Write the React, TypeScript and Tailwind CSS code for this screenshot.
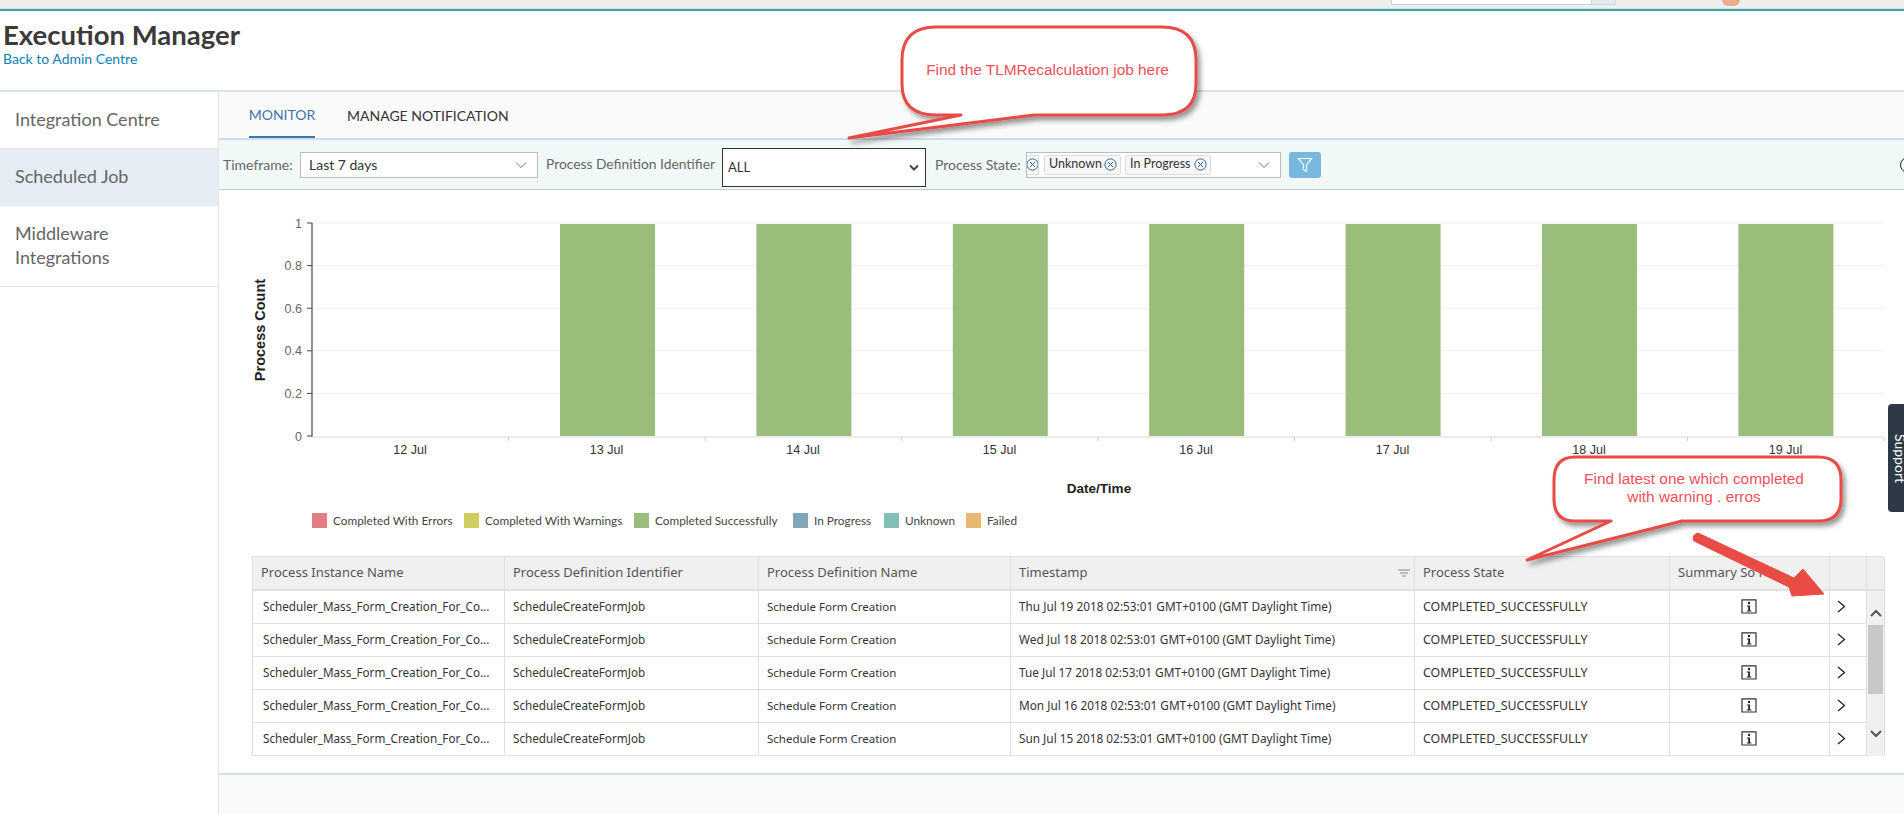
import React from "react";

const rows = [
  "Thu Jul 19 2018 02:53:01 GMT+0100 (GMT Daylight Time)",
  "Wed Jul 18 2018 02:53:01 GMT+0100 (GMT Daylight Time)",
  "Tue Jul 17 2018 02:53:01 GMT+0100 (GMT Daylight Time)",
  "Mon Jul 16 2018 02:53:01 GMT+0100 (GMT Daylight Time)",
  "Sun Jul 15 2018 02:53:01 GMT+0100 (GMT Daylight Time)",
];
const labels = ["12 Jul", "13 Jul", "14 Jul", "15 Jul", "16 Jul", "17 Jul", "18 Jul", "19 Jul"];
const legend = [
  { c: "bg-[#e27d84]", t: "Completed With Errors", w: "w-[152px]" },
  { c: "bg-[#cfcd5f]", t: "Completed With Warnings", w: "w-[170px]" },
  { c: "bg-[#9abd7b]", t: "Completed Successfully", w: "w-[159px]" },
  { c: "bg-[#7fa7b9]", t: "In Progress", w: "w-[91px]" },
  { c: "bg-[#85bdb9]", t: "Unknown", w: "w-[82px]" },
  { c: "bg-[#e8b872]", t: "Failed", w: "w-[60px]" },
];
const cols = "grid grid-cols-[252px_254px_252px_404px_255px_160px_37px]";

function Chevron({ color = "#5a7a96" }: { color?: string }) {
  return (
    <svg width="12" height="8" viewBox="0 0 12 8" fill="none">
      <path d="M1 1.5 L6 6.5 L11 1.5" stroke={color} strokeWidth="1" />
    </svg>
  );
}

function TokenX() {
  return (
    <svg width="13" height="13" viewBox="0 0 13 13" fill="none" className="shrink-0">
      <circle cx="6.5" cy="6.5" r="5.6" stroke="#2f6497" strokeWidth="1" />
      <path d="M4 4 L9 9 M9 4 L4 9" stroke="#2f6497" strokeWidth="1" />
    </svg>
  );
}

function InfoIcon() {
  return (
    <svg width="16" height="15" viewBox="0 0 16 15" fill="none">
      <path d="M1 14 V0.8 H15 V14 H1 Z" stroke="#333" strokeWidth="1.2" />
      <circle cx="8" cy="4" r="1.2" fill="#222" />
      <path d="M6 6.5 H9 V11.6 H10.4 V12.6 H5.8 V11.6 H7.2 V7.5 H6 Z" fill="#222" />
    </svg>
  );
}

function RowChevron() {
  return (
    <svg width="9" height="13" viewBox="0 0 9 13" fill="none">
      <path d="M1 1 L7.5 6.5 L1 12" stroke="#222" strokeWidth="1.3" />
    </svg>
  );
}

function Chart() {
  const ys = [436, 393.4, 350.8, 308.2, 265.6, 223];
  const yl = ["0", "0.2", "0.4", "0.6", "0.8", "1"];
  return (
    <svg width="1685" height="312" viewBox="219 190 1685 312" className="block" fontFamily="'Liberation Sans', sans-serif">
      {ys.slice(1).map((y) => (
        <line key={y} x1="312" x2="1884" y1={y} y2={y} stroke="#ededed" strokeWidth="1" />
      ))}
      {labels.slice(1).map((_, i) => (
        <rect key={i} x={560 + i * 196.4} y="224" width="95" height="212" fill="#9abd7b" />
      ))}
      <line x1="312" x2="312" y1="223" y2="437" stroke="#777" strokeWidth="1.6" />
      <line x1="312" x2="1884" y1="437" y2="437" stroke="#d8d8d8" strokeWidth="1" />
      {ys.map((y, i) => (
        <g key={y}>
          <line x1="307" x2="312" y1={y} y2={y} stroke="#444" strokeWidth="1" />
          <text x="302" y={y + 4.5} fontSize="12.5" textAnchor="end" fill="#666">{yl[i]}</text>
        </g>
      ))}
      {labels.map((l, i) => (
        <g key={l}>
          <line x1={312 + (i + 1) * 196.5} x2={312 + (i + 1) * 196.5} y1="437" y2="441" stroke="#d0d0d0" strokeWidth="1" />
          <text x={410 + i * 196.5} y="454" fontSize="12.5" textAnchor="middle" fill="#333">{l}</text>
        </g>
      ))}
      <text x="1099" y="493" fontSize="13.5" fontWeight="700" textAnchor="middle" fill="#222">Date/Time</text>
      <text transform="translate(265 330) rotate(-90)" fontSize="14.5" fontWeight="700" textAnchor="middle" fill="#222">Process Count</text>
    </svg>
  );
}

function Overlay() {
  return (
    <svg width="1904" height="814" viewBox="0 0 1904 814" className="absolute left-0 top-0 pointer-events-none" fontFamily="'Liberation Sans', sans-serif">
      <defs>
        <filter id="sh" x="-10%" y="-10%" width="125%" height="130%">
          <feDropShadow dx="3" dy="4" stdDeviation="2.5" floodColor="#000" floodOpacity="0.4" />
        </filter>
      </defs>
      <path
        d="M936,27 H1162 Q1196,27 1196,60 V84 Q1196,115 1162,115 H1034 L849,138 L961,115 H936 Q902,115 902,84 V60 Q902,27 936,27 Z"
        fill="#fff" stroke="#e84c45" strokeWidth="3" strokeLinejoin="round" filter="url(#sh)"
      />
      <text x="1047.5" y="75" fontSize="15.4" textAnchor="middle" fill="#f0505a">Find the TLMRecalculation job here</text>
      <path
        d="M1575,457 H1818 Q1841,457 1841,480 V499 Q1841,521 1818,521 H1682 L1527,560 L1611,521 H1575 Q1554,521 1554,499 V480 Q1554,457 1575,457 Z"
        fill="#fff" stroke="#e84c45" strokeWidth="3" strokeLinejoin="round" filter="url(#sh)"
      />
      <text x="1694" y="484" fontSize="15.4" textAnchor="middle" fill="#f0505a">Find latest one which completed</text>
      <text x="1694" y="502" fontSize="15.4" textAnchor="middle" fill="#f0505a">with warning . erros</text>
      <path
        d="M1694,541 Q1691,535 1698,533 L1794,578 L1803,569 L1824,594 L1792,596 L1789,587 Z"
        fill="#e84c45" stroke="#e84c45" strokeWidth="1" strokeLinejoin="round"
      />
    </svg>
  );
}

export default function App() {
  return (
    <div className="relative w-[1904px] h-[814px] overflow-hidden bg-white font-['Lato','Noto_Sans',sans-serif] text-[#333]">
      {/* top strip */}
      <div className="h-[9px] bg-[#eeeeee] flex items-start border-b border-[#dddddd]">
        <div className="ml-[1391px] w-[201px] h-[5px] bg-white border border-t-0 border-[#cbd5dc]" />
        <div className="w-[24px] h-[5px] bg-[#e6e9ec] border border-t-0 border-l-0 border-[#cbd5dc]" />
        <div className="ml-[106px] w-[18px] h-[6px] rounded-b-full bg-[#e9ad8f]" />
      </div>
      <div className="h-[2px] bg-[#36a3a3]" />
      {/* header */}
      <div className="h-[79px] pl-[3px] pt-[8px]">
        <h1 className="text-[27.5px] leading-[32px] font-bold text-[#3a3a3a]">Execution Manager</h1>
        <a className="block text-[14px] leading-[16px] text-[#0a7fb5]">Back to Admin Centre</a>
      </div>
      <div className="h-[2px] bg-[#d9e3ec]" />

      <div className="flex h-[722px]">
        {/* sidebar */}
        <div className="w-[219px] shrink-0 border-r border-[#e5e5e5] text-[18px] leading-[24px] text-[#666]">
          <div className="h-[57px] flex items-center pl-[15px] pb-[2px] border-b border-[#e5e5e5]">Integration Centre</div>
          <div className="h-[57px] flex items-center pl-[15px] pb-[2px] border-b border-[#e5e5e5] bg-[#e7edf5]">Scheduled Job</div>
          <div className="h-[81px] flex items-center pl-[15px] pb-[2px] border-b border-[#e5e5e5]">
            <span className="w-[120px]">Middleware Integrations</span>
          </div>
        </div>

        {/* main */}
        <div className="flex-1 min-w-0 flex flex-col">
          {/* tabs */}
          <div className="h-[46px] bg-[#fafafa] flex pl-[30px] text-[14px]">
            <div className="h-[46px] w-[66px] flex items-center justify-center border-b-2 border-[#3f74a8] text-[#3f74a8] whitespace-nowrap">MONITOR</div>
            <div className="ml-[32px] flex items-center text-[#333] whitespace-nowrap h-[46px]">MANAGE NOTIFICATION</div>
          </div>
          <div className="h-[2px] bg-[#cfdcec]" />
          {/* filter bar */}
          <div className="h-[50px] bg-[#f0f9f8] border-b border-[#c8cccc] flex items-center overflow-hidden pl-[4px] text-[14px] text-[#666]">
            <span className="w-[77px] shrink-0 whitespace-nowrap">Timeframe:</span>
            <div className="w-[238px] h-[26px] shrink-0 bg-white border border-[#bbbbbb] flex items-center justify-between pl-[8px] pr-[10px] text-[#333]">
              Last 7 days
              <Chevron />
            </div>
            <span className="ml-[8px] w-[176px] shrink-0 whitespace-nowrap text-[13.8px]">Process Definition Identifier</span>
            <div className="mt-[5px] w-[204px] h-[39px] shrink-0 bg-white border border-[#333] flex items-center justify-between pl-[5px] pr-[6px] pt-[1px] text-[#333] text-[13px]">
              ALL
              <svg width="10" height="7" viewBox="0 0 10 7" fill="none"><path d="M1 1.5 L5 5.5 L9 1.5" stroke="#444" strokeWidth="2" /></svg>
            </div>
            <span className="ml-[9px] w-[91px] shrink-0 whitespace-nowrap">Process State:</span>
            <div className="w-[255px] h-[26px] shrink-0 bg-white border border-[#bbbbbb] flex items-center overflow-hidden pr-[10px] text-[12.5px] text-[#333]">
              <div className="shrink-0 w-[12px] h-[20px] flex items-center justify-end border border-l-0 border-[#dddddd] bg-[#f7f7f7] overflow-hidden"><span className="shrink-0 -mr-[1px]"><TokenX /></span></div>
              <div className="ml-[5px] shrink-0 w-[77px] h-[20px] flex items-center justify-between pl-[4px] pr-[3px] border border-[#dddddd] bg-[#f7f7f7] rounded-[2px]">Unknown <TokenX /></div>
              <div className="ml-[4px] shrink-0 w-[86px] h-[20px] flex items-center gap-[3px] pl-[4px] border border-[#dddddd] bg-[#f7f7f7] rounded-[2px] whitespace-nowrap">In Progress <TokenX /></div>
              <div className="ml-auto"><Chevron /></div>
            </div>
            <div className="ml-[8px] w-[32px] h-[26px] shrink-0 rounded-[3px] bg-[#78b8dc] flex items-center justify-center">
              <svg width="16" height="16" viewBox="0 0 16 16" fill="none">
                <path d="M1.5 1.5 H14.5 L9.5 8 V14.5 L6.5 12.5 V8 Z" stroke="#fff" strokeWidth="1.2" strokeLinejoin="miter" />
              </svg>
            </div>
            <div className="ml-auto -mr-[12px] w-[16px] h-[16px] shrink-0 rounded-full border border-[#222]" />
          </div>

          {/* chart */}
          <Chart />

          {/* legend */}
          <div className="h-[54px] pl-[93px] pt-[11px] flex items-start text-[11.8px] leading-[15px] text-[#444]">
            {legend.map((l) => (
              <div key={l.t} className={`${l.w} shrink-0 flex items-center gap-[6px] whitespace-nowrap`}>
                <span className={`w-[15px] h-[15px] ${l.c}`} />
                {l.t}
              </div>
            ))}
          </div>

          {/* table */}
          <div className="ml-[33px] w-[1632px] flex border-t border-l border-[#e0e0e0] font-['Noto_Sans',sans-serif]">
            <div className="w-[1614px] shrink-0">
              <div className={`${cols} h-[34px] bg-[#f0f0f0] border-b-2 border-[#e0e0e0] text-[13px] text-[#555]`}>
                {["Process Instance Name", "Process Definition Identifier", "Process Definition Name", "Timestamp", "Process State", "Summary So Far", ""].map((h) => (
                  <div key={h} className="relative flex items-center pl-[8px] border-r border-[#e0e0e0] whitespace-nowrap">
                    {h}
                    {h === "Timestamp" && (
                      <svg width="12" height="8" viewBox="0 0 12 8" className="absolute right-[4px] top-[12px]">
                        <path d="M0 1 H12 M2 4 H10 M4 7 H8" stroke="#888" strokeWidth="1" />
                      </svg>
                    )}
                  </div>
                ))}
              </div>
              {rows.map((r) => (
                <div key={r} className={`${cols} h-[33px] border-b border-[#e0e0e0] text-[11.7px] text-[#333]`}>
                  <div className="flex items-center pl-[10px] border-r border-[#e0e0e0] whitespace-nowrap">Scheduler_Mass_Form_Creation_For_Co...</div>
                  <div className="flex items-center pl-[8px] border-r border-[#e0e0e0]">ScheduleCreateFormJob</div>
                  <div className="flex items-center pl-[8px] border-r border-[#e0e0e0] text-[11.5px]">Schedule Form Creation</div>
                  <div className="flex items-center pl-[8px] border-r border-[#e0e0e0] whitespace-nowrap text-[11.8px]">{r}</div>
                  <div className="flex items-center pl-[8px] border-r border-[#e0e0e0] text-[12.4px]">COMPLETED_SUCCESSFULLY</div>
                  <div className="flex items-center justify-center pr-[2px] pb-[2px] border-r border-[#e0e0e0]"><InfoIcon /></div>
                  <div className="flex items-center pl-[7px] pb-[2px] border-r border-[#e0e0e0]"><RowChevron /></div>
                </div>
              ))}
            </div>
            <div className="w-[18px] shrink-0 flex flex-col border-r border-[#dddddd] bg-[#f0f0f0]">
              <div className="h-[34px] border-b-2 border-[#e0e0e0]" />
              <div className="h-[34px] flex items-end justify-center pb-[8px]">
                <svg width="12" height="8" viewBox="0 0 12 8" fill="none"><path d="M1 7 L6 2 L11 7" stroke="#555" strokeWidth="2" /></svg>
              </div>
              <div className="mx-[1px] h-[69px] bg-[#c8c8c8]" />
              <div className="h-[44px] flex items-end justify-center">
                <svg width="12" height="8" viewBox="0 0 12 8" fill="none"><path d="M1 1 L6 6 L11 1" stroke="#555" strokeWidth="2" /></svg>
              </div>
            </div>
          </div>

          {/* footer */}
          <div className="mt-[17px] h-[2px] bg-[#cfe0ef]" />
          <div className="flex-1 bg-[#fafafa]" />
        </div>
      </div>

      {/* support tab */}
      <div className="absolute left-[1888px] top-[404px] w-[16px] h-[108px] bg-[#2d3a45] rounded-l-[4px] overflow-hidden flex items-center justify-center">
        <span className="rotate-90 text-white text-[14px] shrink-0 translate-x-[4px]">Support</span>
      </div>

      <Overlay />
    </div>
  );
}
